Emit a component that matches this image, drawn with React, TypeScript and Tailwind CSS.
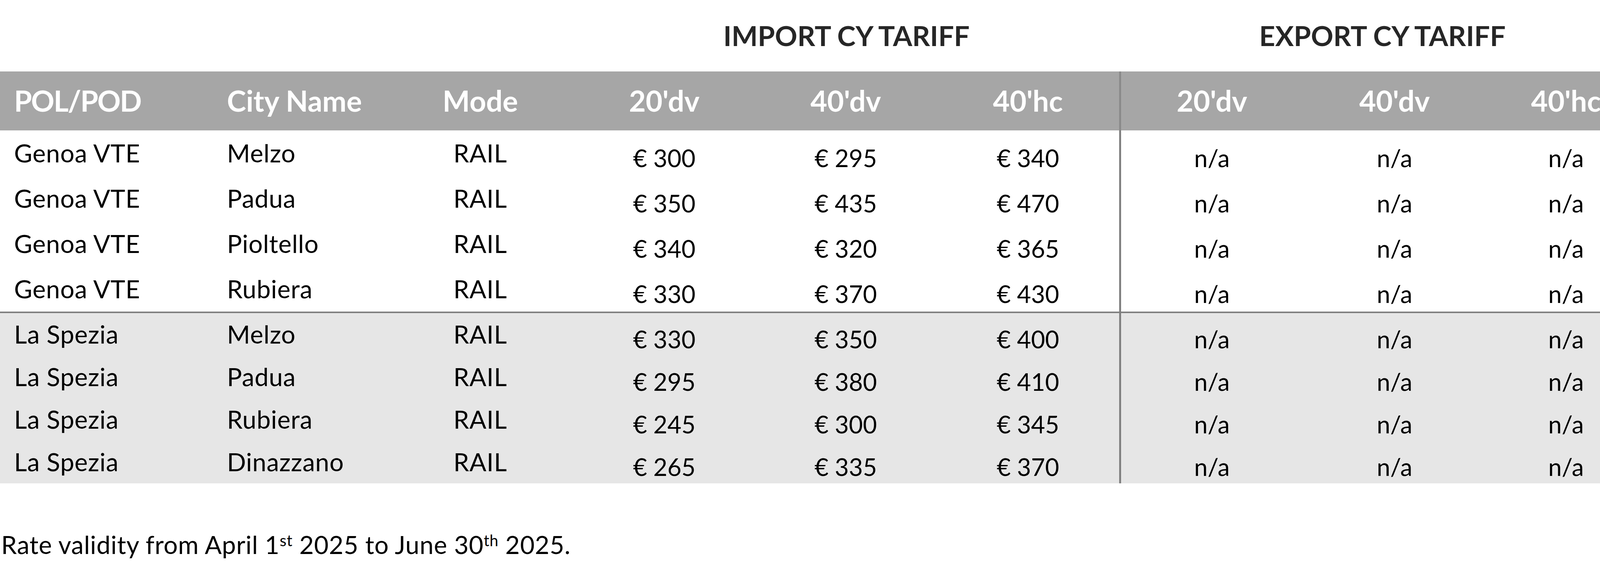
import React from "react";

const cols = "grid grid-cols-[545px_445px_479px_463px_466px_467px_470px_470px_408px]";

const genoa = [
  { pol: "Genoa VTE", city: "Melzo", rates: ["€ 300", "€ 295", "€ 340"] },
  { pol: "Genoa VTE", city: "Padua", rates: ["€ 350", "€ 435", "€ 470"] },
  { pol: "Genoa VTE", city: "Pioltello", rates: ["€ 340", "€ 320", "€ 365"] },
  { pol: "Genoa VTE", city: "Rubiera", rates: ["€ 330", "€ 370", "€ 430"] },
];

const spezia = [
  { pol: "La Spezia", city: "Melzo", rates: ["€ 330", "€ 350", "€ 400"] },
  { pol: "La Spezia", city: "Padua", rates: ["€ 295", "€ 380", "€ 410"] },
  { pol: "La Spezia", city: "Rubiera", rates: ["€ 245", "€ 300", "€ 345"] },
  { pol: "La Spezia", city: "Dinazzano", rates: ["€ 265", "€ 335", "€ 370"] },
];

type Row = { pol: string; city: string; rates: string[] };

function RateRow({ row, height }: { row: Row; height: string }) {
  return (
    <div className={`${cols} ${height}`}>
      <div className="flex items-center pl-[36px] text-[64px] tracking-[0.012em]">{row.pol}</div>
      <div className="flex items-center pl-[36px] text-[64px] tracking-[0.012em]">{row.city}</div>
      <div className="flex items-center justify-center text-[64px] tracking-[0.012em]">RAIL</div>
      {row.rates.map((r, i) => (
        <div key={i} className="flex items-center justify-center pt-[24px]">
          {r}
        </div>
      ))}
      <div className="flex items-center justify-center pt-[24px] border-l-[5px] border-[#808080]">n/a</div>
      <div className="flex items-center justify-center pt-[24px]">n/a</div>
      <div className="flex items-center justify-center pt-[24px]">n/a</div>
    </div>
  );
}

export default function App() {
  return (
    <div className="w-[4216px] h-[1483px] bg-white text-black font-['Lato',sans-serif] overflow-hidden">
      <div className="w-[4213px]">
        {/* group titles */}
        <div className={`${cols} h-[183px] text-[71px] font-bold text-[#262626] leading-[1.2]`}>
          <div className="col-span-3" />
          <div className="col-span-3 flex justify-center pt-[48px]">IMPORT CY TARIFF</div>
          <div className="col-span-3 flex justify-center pt-[48px]">EXPORT CY TARIFF</div>
        </div>

        {/* column header */}
        <div className={`${cols} h-[151px] bg-[#a6a6a6] text-white text-[74px] font-bold leading-[1.2]`}>
          <div className="flex items-center pl-[36px] tracking-[-0.03em]">POL/POD</div>
          <div className="flex items-center pl-[36px]">City Name</div>
          <div className="flex items-center justify-center">Mode</div>
          <div className="flex items-center justify-center">20'dv</div>
          <div className="flex items-center justify-center">40'dv</div>
          <div className="flex items-center justify-center">40'hc</div>
          <div className="flex items-center justify-center border-l-[5px] border-[#8a8a8a]">20'dv</div>
          <div className="flex items-center justify-center">40'dv</div>
          <div className="flex items-center justify-center">40'hc</div>
        </div>

        <div className="text-[62px] leading-[1.2]">
          {genoa.map((row, i) => (
            <RateRow key={i} row={row} height="h-[116px]" />
          ))}
          <div className="h-[4px] bg-[#808080]" />
          <div className="bg-[#e6e6e6]">
            {spezia.map((row, i) => (
              <RateRow key={i} row={row} height="h-[109px]" />
            ))}
          </div>
        </div>
      </div>

      <p className="mt-[119px] pl-[3px] text-[64px] tracking-[0.012em] leading-[1.2]">
        Rate validity from April 1<sup className="text-[40px]">st</sup> 2025 to June 30
        <sup className="text-[40px]">th</sup> 2025.
      </p>
    </div>
  );
}
